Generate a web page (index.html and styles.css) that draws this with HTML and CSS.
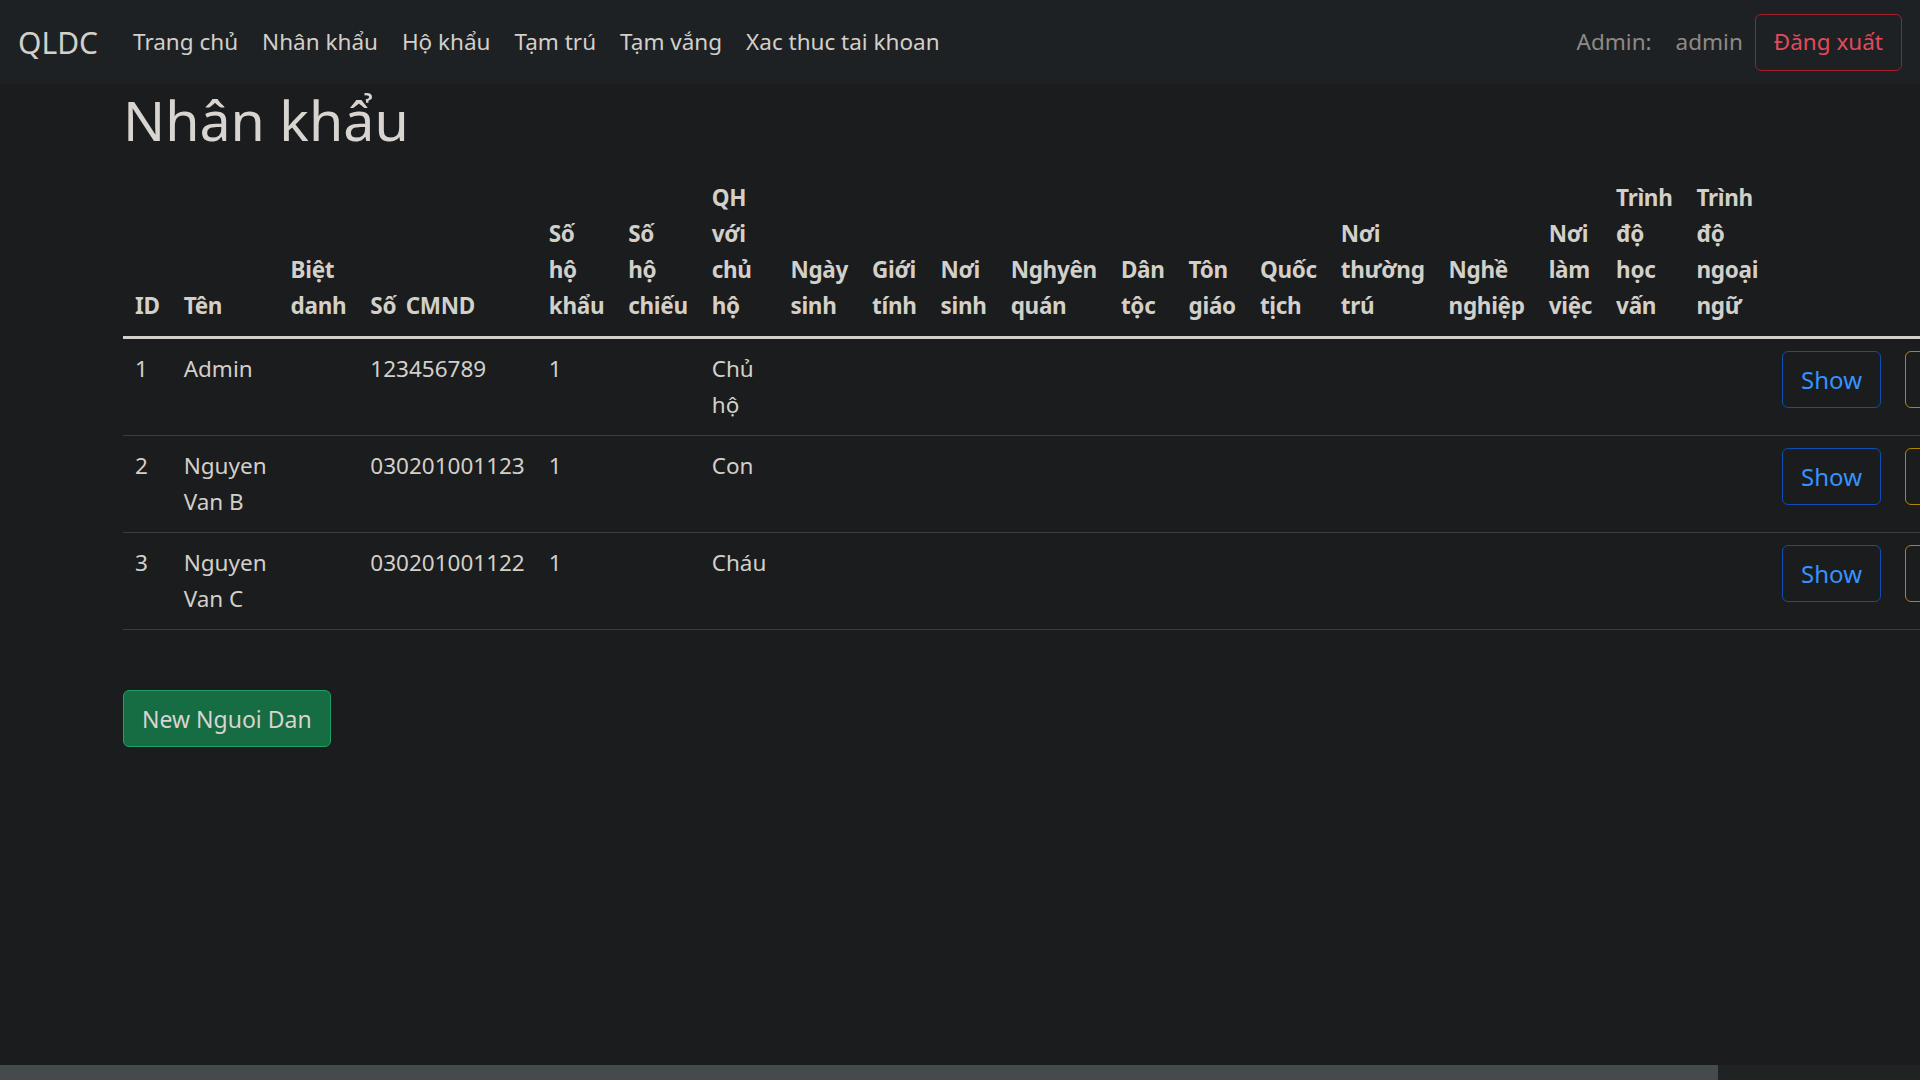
FILE: index.html
```html
<!DOCTYPE html>
<html lang="vi">
<head>
<meta charset="utf-8">
<title>QLDC</title>
<link rel="stylesheet" href="styles.css">
</head>
<body>
<nav class="navbar">
  <div class="navbar-inner">
    <a class="brand" href="#">QLDC</a>
    <ul class="nav">
      <li><a class="nav-link" href="#">Trang chủ</a></li>
      <li><a class="nav-link" href="#">Nhân khẩu</a></li>
      <li><a class="nav-link" href="#">Hộ khẩu</a></li>
      <li><a class="nav-link" href="#">Tạm trú</a></li>
      <li><a class="nav-link" href="#">Tạm vắng</a></li>
      <li><a class="nav-link" href="#">Xac thuc tai khoan</a></li>
    </ul>
    <div class="nav-right">
      <span class="nav-link muted">Admin:</span>
      <span class="nav-link muted">admin</span>
      <a class="btn btn-danger-outline" href="#">Đăng xuất</a>
    </div>
  </div>
</nav>

<main class="container">
  <h1 class="title">Nhân khẩu</h1>
  <table class="table">
    <thead>
      <tr>
        <th>ID</th>
        <th>Tên</th>
        <th>Biệt danh</th>
        <th>Số CMND</th>
        <th>Số hộ khẩu</th>
        <th>Số hộ chiếu</th>
        <th>QH với chủ hộ</th>
        <th>Ngày sinh</th>
        <th>Giới tính</th>
        <th>Nơi sinh</th>
        <th>Nghyên quán</th>
        <th>Dân tộc</th>
        <th>Tôn giáo</th>
        <th>Quốc tịch</th>
        <th>Nơi thường trú</th>
        <th>Nghề nghiệp</th>
        <th>Nơi làm việc</th>
        <th>Trình độ học vấn</th>
        <th>Trình độ ngoại ngữ</th>
        <th colspan="3"></th>
      </tr>
    </thead>
    <tbody>
      <tr>
        <td>1</td><td>Admin</td><td></td><td>123456789</td><td>1</td><td></td><td>Chủ hộ</td>
        <td></td><td></td><td></td><td></td><td></td><td></td><td></td><td></td><td></td><td></td><td></td><td></td>
        <td><a class="btn btn-primary-outline btn-row" href="#">Show</a></td>
        <td><a class="btn btn-warning-outline btn-row" href="#">Edit</a></td>
        <td><a class="btn btn-danger-outline btn-row" href="#">Destroy</a></td>
      </tr>
      <tr>
        <td>2</td><td>Nguyen Van B</td><td></td><td>030201001123</td><td>1</td><td></td><td>Con</td>
        <td></td><td></td><td></td><td></td><td></td><td></td><td></td><td></td><td></td><td></td><td></td><td></td>
        <td><a class="btn btn-primary-outline btn-row" href="#">Show</a></td>
        <td><a class="btn btn-warning-outline btn-row" href="#">Edit</a></td>
        <td><a class="btn btn-danger-outline btn-row" href="#">Destroy</a></td>
      </tr>
      <tr>
        <td>3</td><td>Nguyen Van C</td><td></td><td>030201001122</td><td>1</td><td></td><td>Cháu</td>
        <td></td><td></td><td></td><td></td><td></td><td></td><td></td><td></td><td></td><td></td><td></td><td></td>
        <td><a class="btn btn-primary-outline btn-row" href="#">Show</a></td>
        <td><a class="btn btn-warning-outline btn-row" href="#">Edit</a></td>
        <td><a class="btn btn-danger-outline btn-row" href="#">Destroy</a></td>
      </tr>
    </tbody>
  </table>
  <div class="actions">
    <a class="btn btn-success" href="#">New Nguoi Dan</a>
  </div>
</main>
<div class="hscroll"><div class="hscroll-thumb"></div></div>
</body>
</html>
```

FILE: styles.css
```css
html {
  background: #1a1c1e;
}
body {
  margin: 0;
  background: #1a1c1e;
  color: #d3cfc9;
  font-family: "Noto Sans", "Open Sans", sans-serif;
  font-size: 22.5px;
  line-height: 36px;
}
a {
  text-decoration: none;
}

/* navbar */
.navbar {
  background: #1e2124;
  padding: 12px 0;
}
.navbar-inner {
  display: flex;
  align-items: center;
  padding: 0 18px;
}
.brand {
  color: #d3cfc9;
  font-size: 30px;
  line-height: 45px;
  padding: 7.5px 0;
  margin-right: 23px;
}
.nav {
  display: flex;
  list-style: none;
  margin: 0;
  padding: 0;
  flex: 1;
}
.nav-link {
  display: block;
  padding: 12px;
  color: #d3cfc9;
}
.nav-link.muted {
  color: #8e8a85;
}
.nav-right {
  display: flex;
  align-items: center;
}

/* buttons */
.btn {
  display: inline-block;
  font-size: 22.5px;
  line-height: 36px;
  padding: 9.5px 18px;
  border: 1px solid transparent;
  border-radius: 6px;
  white-space: nowrap;
  background: transparent;
}
.btn-row {
  font-size: 24px;
}
.btn-danger-outline {
  color: #e04b5b;
  border-color: #a31d2c;
}
.btn-primary-outline {
  color: #3592ff;
  border-color: #0b4fb3;
}
.btn-warning-outline {
  color: #ffcd39;
  border-color: #b38600;
}
.btn-success {
  background: #166c43;
  border-color: #20a062;
  color: #d8d4cf;
  font-size: 23px;
}

/* content */
.container {
  width: 1710px;
  margin: 0 auto;
  padding: 0 18px;
  box-sizing: border-box;
}
.title {
  font-size: 55.5px;
  font-weight: 400;
  line-height: 72px;
  margin: 0 0 12px;
  color: #d8d4cf;
}
.table {
  width: 100%;
  border-collapse: collapse;
  margin-bottom: 24px;
  color: #d3cfc9;
}
.table th,
.table td {
  padding: 12px;
  text-align: left;
  border-bottom: 1px solid #383d40;
}
.table th {
  font-weight: 700;
  vertical-align: bottom;
  letter-spacing: -0.3px;
  word-spacing: 4px;
}
.table td {
  vertical-align: top;
}
.table thead tr th {
  border-bottom: 3px solid #d3cfc9;
}
.actions {
  margin-top: 60px;
}

/* horizontal page scrollbar */
.hscroll {
  position: fixed;
  left: 0;
  right: 0;
  bottom: 0;
  height: 15px;
  background: #202324;
}
.hscroll-thumb {
  width: 1718px;
  height: 100%;
  background: #454a4d;
}
```
